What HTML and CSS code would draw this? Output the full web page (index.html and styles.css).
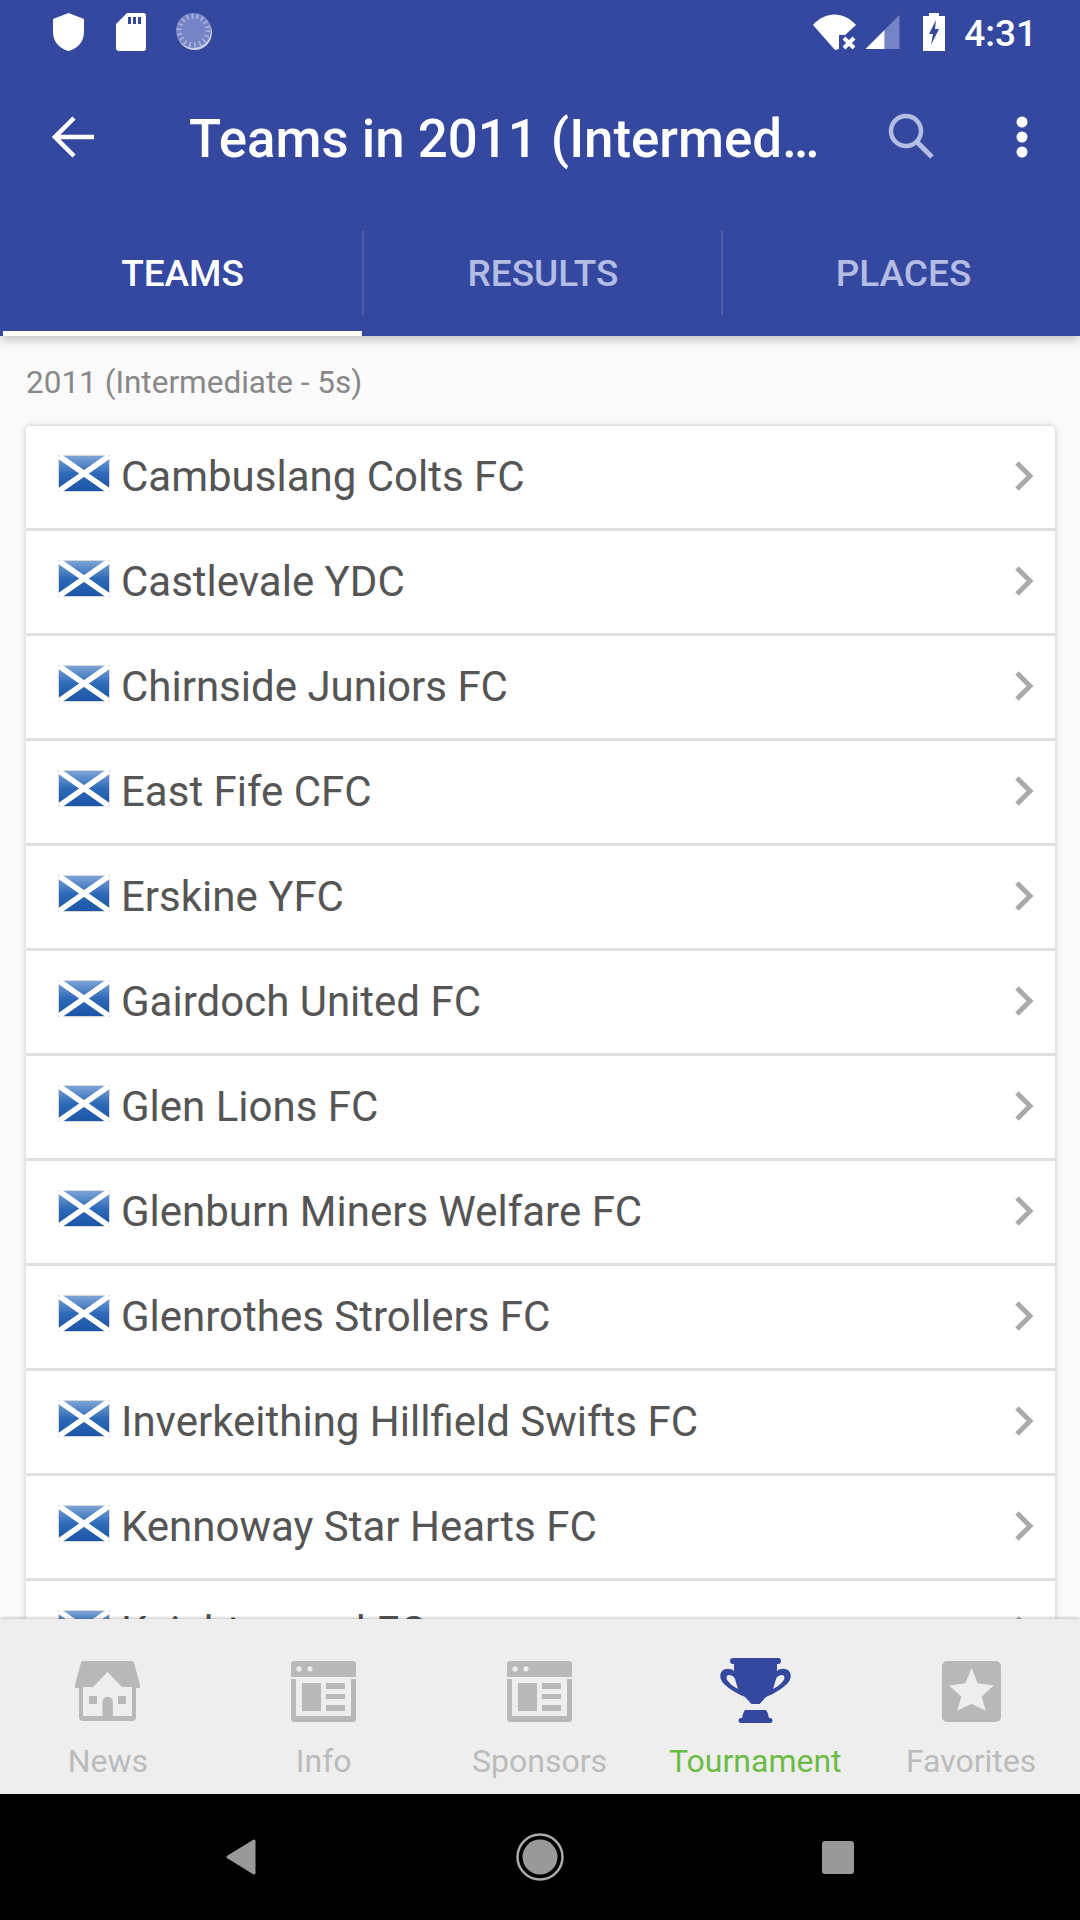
FILE: index.html
```html
<!DOCTYPE html>
<html lang="en">
<head>
  <meta charset="UTF-8">
  <meta name="viewport" content="width=device-width, initial-scale=1">
  <title>Teams in 2011</title>
  <link rel="stylesheet" href="styles.css">
</head>
<body>
  <svg class="sprites" width="0" height="0">
    <defs>
      <linearGradient id="flagblue" x1="0" y1="0" x2="0" y2="1">
        <stop offset="0" stop-color="#7ea5d8"/>
        <stop offset="0.5" stop-color="#2f6ab8"/>
        <stop offset="1" stop-color="#1a55a6"/>
      </linearGradient>
    </defs>
    <symbol id="flag" viewBox="0 0 52 37">
      <rect x="0.5" y="0.5" width="51" height="36" fill="url(#flagblue)" stroke="#d8d8d8"/>
      <path d="M1 1 L51 36 M51 1 L1 36" stroke="#fff" stroke-width="5.5"/>
    </symbol>
    <symbol id="chevron" viewBox="0 0 20 32">
      <path d="M3 3 L16 16 L3 29" fill="none" stroke="#aaa" stroke-width="5"/>
    </symbol>
    <symbol id="paper" viewBox="0 0 65 61">
      <path fill-rule="evenodd" d="M3 0H62a3 3 0 0 1 3 3V16H0V3a3 3 0 0 1 3-3ZM8 5.3a2.7 2.7 0 1 0 .01 0ZM19 5.3a2.7 2.7 0 1 0 .01 0Z"/>
      <path d="M0 18H5V55H60V18H65V58a3 3 0 0 1-3 3H3a3 3 0 0 1-3-3Z"/>
      <path d="M11 22H30V50H11ZM35 22H54V28H35ZM35 33H54V38H35ZM35 44H54V50H35Z"/>
    </symbol>
  </svg>

  <div class="phone">
    <header class="appbar">
      <div class="statusbar">
        <div class="status-left">
          <svg class="st-shield" viewBox="0 0 31 38"><path fill="#fff" d="M15.5 0L31 6V19C31 29 24 36 15.5 38C7 36 0 29 0 19V6Z"/></svg>
          <svg class="st-sd" viewBox="0 0 30 38"><path fill="#fff" fill-rule="evenodd" d="M11 0H27a3 3 0 0 1 3 3V35a3 3 0 0 1-3 3H3a3 3 0 0 1-3-3V11ZM12 4V11H15V4ZM17 4V11H20V4ZM22 4V11H25V4Z"/></svg>
          <svg class="st-sync" viewBox="0 0 36 36">
            <circle cx="18" cy="19" r="17" fill="#fff" opacity="0.75"/>
            <circle cx="17" cy="17" r="17" fill="#7584c4"/>
            <circle cx="17" cy="17" r="14" fill="none" stroke="#aab4dd" stroke-width="5" stroke-dasharray="1.6 3.3"/>
          </svg>
        </div>
        <div class="status-right">
          <svg class="st-wifi" viewBox="0 0 44 38"><path fill="#fff" d="M0 12C12 -2 31 -2 43 12L32 22H26V36L22 37Z"/><path d="M31 25L41 35M41 25L31 35" stroke="#fff" stroke-width="4"/></svg>
          <svg class="st-signal" viewBox="0 0 34 36"><path fill="#7584c4" d="M34 2V36H19V17Z"/><path fill="#fff" d="M19 17V36H0Z"/></svg>
          <svg class="st-batt" viewBox="0 0 22 38"><path fill="#fff" fill-rule="evenodd" d="M6 0H16V3H22V38H0V3H6ZM13 7L6 21H10L8 32L16 16H12Z"/></svg>
          <span class="clock">4:31</span>
        </div>
      </div>
      <div class="toolbar">
        <svg class="tb-back" viewBox="0 0 42 42"><path d="M22 2L3 21L22 40M3 21H42" fill="none" stroke="#fff" stroke-width="4.5"/></svg>
        <h1 class="tb-title">Teams in 2011 (Intermed…</h1>
        <svg class="tb-search" viewBox="0 0 46 46"><circle cx="18" cy="18" r="15" fill="none" stroke="#b4bde3" stroke-width="4.5"/><path d="M29 29L44 44" stroke="#b4bde3" stroke-width="5"/></svg>
        <svg class="tb-more" viewBox="0 0 12 42"><circle cx="6" cy="6" r="5.5" fill="#fff"/><circle cx="6" cy="21" r="5.5" fill="#fff"/><circle cx="6" cy="36" r="5.5" fill="#fff"/></svg>
      </div>
      <nav class="tabs">
        <div class="tab tab-on">TEAMS</div>
        <div class="tab">RESULTS</div>
        <div class="tab">PLACES</div>
      </nav>
    </header>

    <main class="content">
      <p class="section-title">2011 (Intermediate - 5s)</p>
      <ul class="team-list">
        <li class="team"><svg class="flag"><use href="#flag"/></svg><span class="team-name">Cambuslang Colts FC</span><svg class="chev"><use href="#chevron"/></svg></li>
        <li class="team"><svg class="flag"><use href="#flag"/></svg><span class="team-name">Castlevale YDC</span><svg class="chev"><use href="#chevron"/></svg></li>
        <li class="team"><svg class="flag"><use href="#flag"/></svg><span class="team-name">Chirnside Juniors FC</span><svg class="chev"><use href="#chevron"/></svg></li>
        <li class="team"><svg class="flag"><use href="#flag"/></svg><span class="team-name">East Fife CFC</span><svg class="chev"><use href="#chevron"/></svg></li>
        <li class="team"><svg class="flag"><use href="#flag"/></svg><span class="team-name">Erskine YFC</span><svg class="chev"><use href="#chevron"/></svg></li>
        <li class="team"><svg class="flag"><use href="#flag"/></svg><span class="team-name">Gairdoch United FC</span><svg class="chev"><use href="#chevron"/></svg></li>
        <li class="team"><svg class="flag"><use href="#flag"/></svg><span class="team-name">Glen Lions FC</span><svg class="chev"><use href="#chevron"/></svg></li>
        <li class="team"><svg class="flag"><use href="#flag"/></svg><span class="team-name">Glenburn Miners Welfare FC</span><svg class="chev"><use href="#chevron"/></svg></li>
        <li class="team"><svg class="flag"><use href="#flag"/></svg><span class="team-name">Glenrothes Strollers FC</span><svg class="chev"><use href="#chevron"/></svg></li>
        <li class="team"><svg class="flag"><use href="#flag"/></svg><span class="team-name">Inverkeithing Hillfield Swifts FC</span><svg class="chev"><use href="#chevron"/></svg></li>
        <li class="team"><svg class="flag"><use href="#flag"/></svg><span class="team-name">Kennoway Star Hearts FC</span><svg class="chev"><use href="#chevron"/></svg></li>
        <li class="team"><svg class="flag"><use href="#flag"/></svg><span class="team-name">Knightswood FC</span><svg class="chev"><use href="#chevron"/></svg></li>
      </ul>
    </main>

    <footer class="bottom-nav">
      <div class="nav-item">
        <svg class="nav-icon" viewBox="0 0 65 61"><path fill="#b8b8b8" fill-rule="evenodd" d="M8 0H57a2 2 0 0 1 2 1.5L65 24V27H61V56a4 4 0 0 1-4 4H8a4 4 0 0 1-4-4V27H0V24L6 1.5a2 2 0 0 1 2-1.5ZM32.5 11L18 26H8V55H27.5V41a5.2 5.2 0 0 1 10.4 0V55H57V26H47ZM14 35H22V43H14ZM43 35H51V43H43Z"/></svg>
        <span>News</span>
      </div>
      <div class="nav-item">
        <svg class="nav-icon" fill="#b8b8b8"><use href="#paper"/></svg>
        <span>Info</span>
      </div>
      <div class="nav-item">
        <svg class="nav-icon" fill="#b8b8b8"><use href="#paper"/></svg>
        <span>Sponsors</span>
      </div>
      <div class="nav-item nav-on">
        <svg class="nav-icon nav-cup" viewBox="0 0 71 65">
          <path fill="#3448a0" fill-rule="evenodd" d="M13 0H58a3 3 0 0 1 0 6H57V13C60 10 66 10 69 13C72 17 71 22 67 26C62 31 53 36 46 39L39.5 46H31.5L25 39C18 36 9 31 4 26C0 22 -1 17 2 13C5 10 11 10 14 13V6H13a3 3 0 0 1 0-6ZM9 17C6 17 6 21 8 23C10 26 14 29 18 31L15 21C14 18 11 17 9 17ZM62 17C60 17 57 18 56 21L53 31C57 29 61 26 63 23C65 21 65 17 62 17Z"/>
          <path fill="#3448a0" d="M26 52H45C47 52 47 54 48 56L49 60H50a2.5 2.5 0 0 1 0 5H21a2.5 2.5 0 0 1 0-5H22L23 56C24 54 24 52 26 52Z"/>
        </svg>
        <span>Tournament</span>
      </div>
      <div class="nav-item">
        <svg class="nav-icon" viewBox="0 0 58 60"><path fill="#b8b8b8" fill-rule="evenodd" d="M5 0H53a5 5 0 0 1 5 5V55a5 5 0 0 1-5 5H5a5 5 0 0 1-5-5V5a5 5 0 0 1 5-5ZM29 7L23 22L7 24L19 35L15 49L29 42L43 49L39 35L51 24L35 22Z"/></svg>
        <span>Favorites</span>
      </div>
    </footer>

    <div class="sysnav">
      <svg class="sys-back" viewBox="0 0 30 36"><path fill="#999" stroke="#999" stroke-width="3" stroke-linejoin="round" d="M2 18L28 2V34Z"/></svg>
      <svg class="sys-home" viewBox="0 0 48 48"><circle cx="24" cy="24" r="22.5" fill="none" stroke="#aaa" stroke-width="2.5"/><circle cx="24" cy="24" r="17.5" fill="#999"/></svg>
      <div class="sys-recent"></div>
    </div>
  </div>
</body>
</html>
```

FILE: styles.css
```css
* {
  box-sizing: border-box;
}

html, body {
  margin: 0;
  padding: 0;
}

body {
  font-family: Roboto, "Liberation Sans", sans-serif;
  background: #000;
}

.sprites {
  position: absolute;
}

.phone {
  width: 1080px;
  height: 1920px;
  display: flex;
  flex-direction: column;
  overflow: hidden;
  background: #fafafa;
}

/* top blue area */
.appbar {
  flex: none;
  height: 336px;
  background: #3448a0;
  display: flex;
  flex-direction: column;
  box-shadow: 0 4px 10px rgba(0, 0, 0, 0.22);
  position: relative;
  z-index: 2;
}

.statusbar {
  height: 66px;
  padding: 13px 43px 0 53px;
  display: flex;
  justify-content: space-between;
  align-items: flex-start;
}

.status-left, .status-right {
  display: flex;
  align-items: flex-start;
}

.st-shield {
  width: 31px;
  height: 38px;
}

.st-sd {
  width: 30px;
  height: 38px;
  margin-left: 32px;
}

.st-sync {
  width: 37px;
  height: 37px;
  margin-left: 30px;
}

.st-wifi {
  width: 44px;
  height: 38px;
}

.st-signal {
  width: 35px;
  height: 36px;
  margin-left: 8px;
}

.st-batt {
  width: 22px;
  height: 38px;
  margin-left: 23px;
}

.clock {
  margin-left: 19px;
  padding-top: 2px;
  color: #fff;
  font-size: 37px;
  font-weight: 500;
  line-height: 38px;
}

.toolbar {
  height: 146px;
  padding: 0 52px 2px 52px;
  display: flex;
  align-items: center;
}

.tb-back {
  width: 42px;
  height: 42px;
  flex: none;
  margin-bottom: 2px;
}

.tb-title {
  margin: 0 0 0 95px;
  padding-top: 2px;
  flex: 1;
  color: #fff;
  font-size: 52.8px;
  font-weight: 500;
  white-space: nowrap;
}

.tb-search {
  width: 46px;
  height: 46px;
  flex: none;
  margin-bottom: 4px;
}

.tb-more {
  width: 12px;
  height: 42px;
  flex: none;
  margin-left: 82px;
  margin-bottom: 3px;
}

.tabs {
  flex: 1;
  padding: 0 0 0 3px;
  display: grid;
  grid-template-columns: repeat(3, 1fr);
}

.tab {
  position: relative;
  display: flex;
  align-items: center;
  justify-content: center;
  padding-bottom: 2px;
  color: #b4bde3;
  font-size: 37px;
  font-weight: 500;
}

.tab:nth-child(2) {
  padding-left: 3px;
}

.tab:nth-child(3) {
  padding-left: 6px;
}

.tab-on {
  color: #fff;
  box-shadow: inset 0 -5px 0 #fff;
}

.tab + .tab::before {
  content: "";
  position: absolute;
  left: 0;
  top: 19px;
  width: 2px;
  height: 84px;
  background: #4e60ae;
}

/* list */
.content {
  flex: 1;
  min-height: 0;
  overflow: hidden;
  padding: 0 25px 0 26px;
}

.section-title {
  margin: 0;
  height: 90px;
  padding-top: 27px;
  color: #888;
  font-size: 31.5px;
  line-height: 40px;
}

.team-list {
  margin: 0;
  padding: 0;
  list-style: none;
  background: #fff;
  border-radius: 4px;
  box-shadow: 0 0 6px rgba(0, 0, 0, 0.22);
}

.team {
  height: 105px;
  padding: 0 21px 0 32px;
  border-bottom: 3px solid #e0e0e0;
  display: flex;
  align-items: center;
  gap: 11px;
}

.flag {
  width: 52px;
  height: 37px;
  flex: none;
  margin-bottom: 7px;
}

.team-name {
  flex: 1;
  padding-bottom: 2px;
  color: #555;
  font-size: 42px;
}

.chev {
  width: 20px;
  height: 32px;
  flex: none;
  margin-bottom: 3px;
}

/* bottom tabs */
.bottom-nav {
  flex: none;
  height: 175px;
  background: #eee;
  display: flex;
  padding: 42px 1px 0 0;
  box-shadow: 0 -1px 3px rgba(0, 0, 0, 0.25);
  position: relative;
  z-index: 2;
}

.nav-item {
  flex: 1;
  display: flex;
  flex-direction: column;
  align-items: center;
  color: #bbb;
  font-size: 32px;
}

.nav-icon {
  height: 61px;
  width: 65px;
  margin-bottom: 20px;
}

.nav-cup {
  width: 71px;
  height: 65px;
  margin-top: -3px;
  margin-bottom: 19px;
}

.nav-on {
  color: #6cbb45;
}

/* android buttons */
.sysnav {
  flex: none;
  height: 126px;
  background: #000;
  display: flex;
  align-items: center;
  justify-content: center;
}

.sys-back {
  width: 30px;
  height: 36px;
  margin-right: 260px;
}

.sys-home {
  width: 48px;
  height: 48px;
  margin-right: 258px;
}

.sys-recent {
  width: 32px;
  height: 33px;
  background: #999;
  border-radius: 3px;
}
```
